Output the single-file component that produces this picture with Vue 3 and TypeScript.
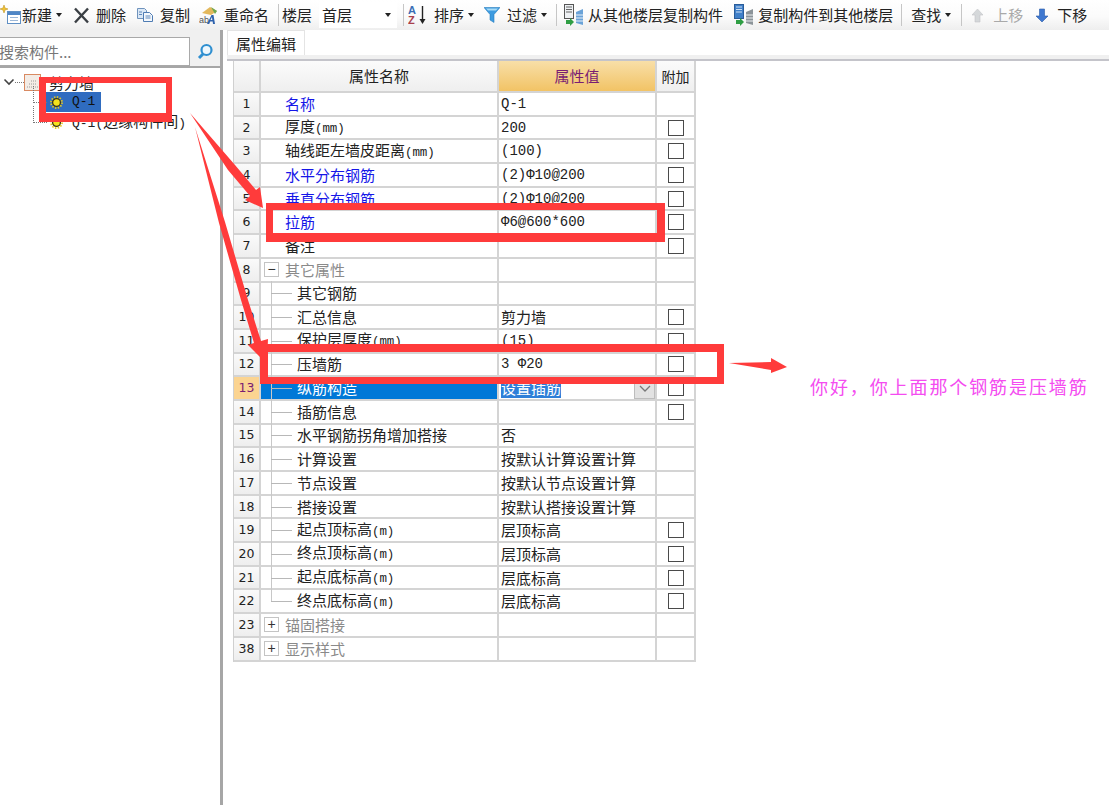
<template>
  <div class="page">
    <div class="toolbar">
      <div class="tool">
        <svg width="22" height="22" viewBox="0 0 22 22"><path d="M4 1l1 3 3 1-3 1-1 3-1-3-3-1 3-1z" fill="#f2c230" stroke="#b98a10" stroke-width=".5"/><rect x="7.500" y="7.500" width="13" height="12" fill="#fff" stroke="#5f8fc4"/><rect x="8" y="8" width="12" height="3" fill="#4f86c6"/><path d="M10 13.500h8M10 16.500h8" stroke="#9db8d8"/></svg>
        <span>新建</span><i class="caret"></i>
      </div>
      <div class="tool m11 g6">
        <svg width="17" height="17" viewBox="0 0 17 17"><path d="M2 1.500l13 14M15 1.500l-13 14" stroke="#3a3f44" stroke-width="2.400"/></svg>
        <span>删除</span>
      </div>
      <div class="tool m10 g6">
        <svg width="18" height="18" viewBox="0 0 18 18"><path d="M1.500 2.500h7l2 2v8h-9z" fill="#dbe8f6" stroke="#6f93bd"/><path d="M7.500 6.500h6l3 3v6h-9z" fill="#f4f8fd" stroke="#4f7cb3"/><path d="M9.500 10h5M9.500 12h5M3 6h3M3 8.500h3" stroke="#5f88ba"/></svg>
        <span>复制</span>
      </div>
      <div class="tool m9 g6">
        <svg width="19" height="20" viewBox="0 0 19 20"><path d="M3 8l8-6 7 4-6 4z" fill="#e3b85c"/><path d="M12 2l6 4-2 3z" fill="#6fa84f"/><text x="0" y="18" class="ab">ab</text><path d="M8 19l4.500-9h2l1.500 9h-2l-.3-2.500h-2.500l-1 2.500zM11.500 15h1.800l-.3-3z" fill="#2e62ad"/></svg>
        <span>重命名</span>
      </div>
      <i class="sep m9"></i>
      <div class="tool m3"><span>楼层</span></div>
      <div class="combo m7"><span>首层</span><i class="caret"></i></div>
      <i class="sep m6"></i>
      <div class="tool m4 g6">
        <svg width="20" height="22" viewBox="0 0 20 22"><text x="0" y="10" class="az blue">A</text><text x="0" y="20" class="az red">Z</text><path d="M14.500 2v16" stroke="#222" stroke-width="1.400"/><path d="M11.500 15l3 5 3-5z" fill="#222"/></svg>
        <span>排序</span><i class="caret"></i>
      </div>
      <div class="tool m10 g7">
        <svg width="16" height="18" viewBox="0 0 16 18"><path d="M0 1.500h16l-6 7v8l-4-2.500v-5.500z" fill="#3d9be0" stroke="#2a7fc0" stroke-width=".6"/><path d="M2 2.500h12l-2 2h-8z" fill="#a9dcf6"/></svg>
        <span>过滤</span><i class="caret"></i>
      </div>
      <i class="sep m9"></i>
      <div class="tool m6 g3">
        <svg width="22" height="24" viewBox="0 0 22 24"><rect x="1.500" y="1.500" width="9" height="14" fill="#eef1f4" stroke="#555"/><path d="M3 4h6M3 6.500h6M3 9h6" stroke="#666"/><path d="M3 17h4v-2l4 4-4 4v-2h-4z" fill="#2f9e44"/><path d="M13 9l7-3v16l-7-2z" fill="#6aa3d8"/><path d="M13 12h7M13 15h7M13 18h7" stroke="#e8f1fa"/></svg>
        <span>从其他楼层复制构件</span>
      </div>
      <div class="tool m10 g3">
        <svg width="22" height="24" viewBox="0 0 22 24"><rect x="1.500" y="1.500" width="9" height="14" fill="#3f7fc8" stroke="#2a5c99"/><path d="M3 4h6M3 6.500h6M3 9h6" stroke="#cfe0f3"/><path d="M3 17h4v-2l4 4-4 4v-2h-4z" fill="#2f9e44"/><path d="M13 9l7-3v16l-7-2z" fill="#8c9499"/><path d="M13 12h7M13 15h7M13 18h7" stroke="#eceff1"/></svg>
        <span>复制构件到其他楼层</span>
      </div>
      <i class="sep m8"></i>
      <div class="tool m9"><span>查找</span><i class="caret"></i></div>
      <i class="sep m10"></i>
      <div class="tool m9 g9 off">
        <svg width="13" height="15" viewBox="0 0 13 15"><path d="M6.500 1l5.500 6h-3v7h-5v-7h-3z" fill="#d5d8da" stroke="#c2c5c8" stroke-width=".6"/></svg>
        <span>上移</span>
      </div>
      <div class="tool m12 g8">
        <svg width="14" height="15" viewBox="0 0 14 15"><path d="M7 14l-6-6h3.500v-7h5v7h3.500z" fill="#3f78d0" stroke="#2c5ca8" stroke-width=".6"/></svg>
        <span>下移</span>
      </div>
    </div>

    <div class="main">
      <aside class="side">
        <div class="search">
          <div class="search-box">搜索构件...</div>
          <div class="search-btn">
            <svg width="20" height="20" viewBox="0 0 20 20"><circle cx="11.500" cy="8" r="5" fill="#eef7fd" stroke="#2f8fd0" stroke-width="2.200"/><path d="M8 12l-4 4" stroke="#2f8fd0" stroke-width="3"/></svg>
          </div>
        </div>
        <div class="tree">
          <div class="node top">
            <svg class="chev" width="12" height="8" viewBox="0 0 12 8"><path d="M1.500 1.500l4.500 4.500 4.500-4.500" fill="none" stroke="#444" stroke-width="1.600"/></svg>
            <i class="dots-h"></i>
            <svg width="17" height="17" viewBox="0 0 17 17"><rect x=".5" y=".5" width="16" height="16" fill="#f3ece6" stroke="#d98a62"/><path d="M3 13h11M5 10h8M7 7h5" stroke="#9a9a9a" stroke-dasharray="1 1"/></svg>
            <span class="node-text">剪力墙</span>
          </div>
          <div class="node child">
            <i class="elbow"></i>
            <div class="picked">
              <svg width="13" height="13" viewBox="0 0 14 14"><circle cx="7" cy="7" r="4.200" fill="#f4e21c" stroke="#3f3610" stroke-width="1.400"/><circle cx="7" cy="7" r="6" fill="none" stroke="#e8c81c" stroke-width="1.800" stroke-dasharray="1.600 1.500"/></svg>
              <span class="asc">Q-1</span>
            </div>
          </div>
          <div class="node child">
            <i class="elbow"></i>
            <div class="plain">
              <svg width="13" height="13" viewBox="0 0 14 14"><circle cx="7" cy="7" r="4.200" fill="#f4e21c" stroke="#3f3610" stroke-width="1.400"/><circle cx="7" cy="7" r="6" fill="none" stroke="#e8c81c" stroke-width="1.800" stroke-dasharray="1.600 1.500"/></svg>
              <span><span class="asc">Q-1(</span>边缘构件间<span class="asc">)</span></span>
            </div>
          </div>
        </div>
      </aside>

      <section class="editor">
        <div class="tabs"><div class="tab">属性编辑</div></div>
        <div class="tab-line"></div>
        <div class="grid">
          <div class="cell head num"></div>
          <div class="cell head">属性名称</div>
          <div class="cell head gold">属性值</div>
          <div class="cell head extra">附加</div>
          <template v-for="row in rows" :key="row.no">
            <div class="cell num" :class="{ current: row.no === 13 }">{{ row.no }}</div>
            <div class="cell name" :class="[row.kind, { link: row.link, sel: row.no === 13, end: row.no === 22 }]">
              <i v-if="row.kind === 'group'" class="fold">{{ row.open ? '−' : '+' }}</i>
              <span>{{ row.name }}<small v-if="row.unit">{{ row.unit }}</small></span>
            </div>
            <div class="cell value" :class="{ mono: row.mono }">
              <span :class="{ mark: row.no === 13 }">{{ row.value }}</span>
              <i v-if="row.no === 13" class="drop">
                <svg width="12" height="7" viewBox="0 0 12 7"><path d="M1 1l5 5 5-5" fill="none" stroke="#777" stroke-width="1.300"/></svg>
              </i>
            </div>
            <div class="cell box-cell"><i v-if="row.check" class="check"></i></div>
          </template>
        </div>
      </section>
    </div>

    <svg class="marks" width="1109" height="805" viewBox="0 0 1109 805">
      <g fill="#ff3b3b" fill-rule="evenodd">
        <path d="M39 77H172V122H39ZM46 83V113H166V83Z"/>
        <path d="M266 203H665V242H266ZM273 210V233H657V210Z"/>
        <path d="M260 344H724V384H260ZM268 352V377H717V352Z"/>
        <path d="M190 113L235 165L256 190L260 187L263 208L245 200L250 196L228 170Z"/>
        <path d="M195 127L225 222L248 300L261 341L268 339L267 364L248 345L254 343L241 300L219 223Z"/>
        <path d="M729 363L771 362L771 358L787 367L771 373L771 370Z"/>
      </g>
      <text x="810" y="394" class="note">你好，你上面那个钢筋是压墙筋</text>
    </svg>
  </div>
</template>

<script setup lang="ts">
interface Row {
  no: number
  name: string
  unit?: string
  value?: string
  mono?: boolean
  kind?: string
  link?: boolean
  open?: boolean
  check?: boolean
}

const rows: Row[] = [
  { no: 1, name: '名称', value: 'Q-1', mono: true, link: true },
  { no: 2, name: '厚度', unit: '(mm)', value: '200', mono: true, check: true },
  { no: 3, name: '轴线距左墙皮距离', unit: '(mm)', value: '(100)', mono: true, check: true },
  { no: 4, name: '水平分布钢筋', value: '(2)Φ10@200', mono: true, link: true, check: true },
  { no: 5, name: '垂直分布钢筋', value: '(2)Φ10@200', mono: true, link: true, check: true },
  { no: 6, name: '拉筋', value: 'Φ6@600*600', mono: true, link: true, check: true },
  { no: 7, name: '备注', check: true },
  { no: 8, name: '其它属性', kind: 'group', open: true },
  { no: 9, name: '其它钢筋', kind: 'sub' },
  { no: 10, name: '汇总信息', kind: 'sub', value: '剪力墙', check: true },
  { no: 11, name: '保护层厚度', unit: '(mm)', kind: 'sub', value: '(15)', mono: true, check: true },
  { no: 12, name: '压墙筋', kind: 'sub', value: '3 Φ20', mono: true, check: true },
  { no: 13, name: '纵筋构造', kind: 'sub', value: '设置插筋', check: true },
  { no: 14, name: '插筋信息', kind: 'sub', check: true },
  { no: 15, name: '水平钢筋拐角增加搭接', kind: 'sub', value: '否' },
  { no: 16, name: '计算设置', kind: 'sub', value: '按默认计算设置计算' },
  { no: 17, name: '节点设置', kind: 'sub', value: '按默认节点设置计算' },
  { no: 18, name: '搭接设置', kind: 'sub', value: '按默认搭接设置计算' },
  { no: 19, name: '起点顶标高', unit: '(m)', kind: 'sub', value: '层顶标高', check: true },
  { no: 20, name: '终点顶标高', unit: '(m)', kind: 'sub', value: '层顶标高', check: true },
  { no: 21, name: '起点底标高', unit: '(m)', kind: 'sub', value: '层底标高', check: true },
  { no: 22, name: '终点底标高', unit: '(m)', kind: 'sub', value: '层底标高', check: true },
  { no: 23, name: '锚固搭接', kind: 'group' },
  { no: 38, name: '显示样式', kind: 'group' },
]
</script>

<style>
html, body { margin: 0; background: #fff; }
</style>

<style scoped>
.page {
  position: relative;
  width: 1109px;
  height: 805px;
  overflow: hidden;
  background: #fff;
  color: #222;
  font: 15px/20px "Noto Sans CJK SC", "Liberation Sans", sans-serif;
}

.toolbar {
  display: flex;
  align-items: center;
  height: 30px;
  background: linear-gradient(#fff, #fbfbfb 55%, #eeeeee);
  white-space: nowrap;
}
.tool { display: flex; align-items: center; flex: none; }
.tool svg { flex: none; }
.off { color: #a9a9a9; }
.caret {
  flex: none;
  width: 0;
  height: 0;
  margin-left: 4px;
  border: 3px solid transparent;
  border-top: 4px solid #222;
  border-bottom: 0;
}
.g6 .caret { margin-left: -2px; }
.g7 .caret { margin-left: -3px; }
.sep { flex: none; width: 1px; height: 22px; background: #c6c6c6; }
.combo {
  display: flex;
  align-items: center;
  justify-content: space-between;
  flex: none;
  width: 78px;
  height: 26px;
  padding: 0 6px 0 3px;
  box-sizing: border-box;
  background: #fff;
}
.m3 { margin-left: 3px; }
.m4 { margin-left: 4px; }
.m6 { margin-left: 6px; }
.m7 { margin-left: 7px; }
.m8 { margin-left: 8px; }
.m9 { margin-left: 9px; }
.m10 { margin-left: 10px; }
.m11 { margin-left: 11px; }
.m12 { margin-left: 12px; }
.g3 { gap: 3px; }
.g6 { gap: 6px; }
.g7 { gap: 7px; }
.g8 { gap: 8px; }
.g9 { gap: 9px; }

.ab { font: 9px "Liberation Sans", sans-serif; fill: #555; }
.az { font: bold 11px "Liberation Sans", sans-serif; }
.blue { fill: #3a6fb5; }
.red { fill: #a8404a; }

.main { display: flex; height: 775px; }

.side {
  flex: none;
  width: 220px;
  height: 100%;
  border-right: 3px solid #a6a6a6;
  box-sizing: content-box;
}
.search {
  display: flex;
  height: 38px;
  padding-top: 7px;
  box-sizing: border-box;
  background: #f0f0f0;
  border-bottom: 2px solid #a6a6a6;
}
.search-box {
  flex: none;
  width: 192px;
  height: 29px;
  margin-left: -2px;
  box-sizing: border-box;
  border: 1px solid #a9a9a9;
  background: #fff;
  color: #777;
  line-height: 27px;
}
.search-btn {
  flex: 1;
  height: 29px;
  display: flex;
  align-items: center;
  justify-content: center;
}
.tree { position: relative; padding-top: 4px; }
.node { display: flex; align-items: center; height: 20px; }
.chev { margin-left: 3px; flex: none; }
.dots-h { width: 9px; border-top: 1px dotted #777; flex: none; }
.node-text { margin-left: 8px; padding-top: 2px; }
.child { position: relative; padding-left: 46px; }
.elbow {
  position: absolute;
  left: 33px;
  top: -6px;
  width: 13px;
  height: 16px;
  border-left: 1px dotted #777;
  border-bottom: 1px dotted #777;
}
.picked, .plain {
  display: flex;
  align-items: center;
  height: 20px;
  gap: 9px;
  padding: 0 6px 0 4px;
}
.asc { font: 13px/20px "Liberation Mono", monospace; }
.picked { background: #2f6cc0; color: #111; }

.editor { flex: 1; min-width: 0; padding-left: 10px; background: #fff; }
.tabs { display: flex; height: 25px; margin-left: -6px; }
.tab {
  width: 78px;
  padding: 3px 0 0 8px;
  box-sizing: border-box;
  background: #fff;
  border: 1px solid #e4e4e4;
  border-bottom: 0;
  white-space: nowrap;
}
.tab-line {
  height: 6px;
  margin-left: -6px;
  background: #f0f0f0;
  border-bottom: 2px solid #c4c4ca;
  box-sizing: border-box;
}

.grid {
  display: grid;
  grid-template-columns: 27px 238px 158px 39px;
  grid-template-rows: 32px repeat(24, 23.700px);
  width: 462px;
  border-left: 1px solid #d0d0d0;
}
.cell {
  position: relative;
  display: flex;
  align-items: center;
  min-width: 0;
  border-right: 2px solid #d4d4d4;
  border-bottom: 2px solid #d4d4d4;
  box-sizing: border-box;
  white-space: nowrap;
}
.head {
  justify-content: center;
  background: linear-gradient(#fbfbfb, #efefef);
}
.gold {
  background: linear-gradient(#f8dfa8, #f2c365);
  color: #7a1d73;
}
.extra { font-size: 14px; }
.num {
  justify-content: center;
  background: linear-gradient(#fafafa, #eeeeee);
  font: 12.500px/20px "DejaVu Sans", sans-serif;
}
.num.current { background: #fbd491; color: #7a1d73; }

.name { padding-left: 24px; }
.name small { font: 12.500px/20px "Liberation Mono", monospace; letter-spacing: -.1px; }
.link { color: #1515e8; }
.sub { padding-left: 36px; }
.sub::before {
  content: "";
  position: absolute;
  left: 10px;
  top: -2px;
  bottom: -2px;
  width: 1px;
  background: #c8c8c8;
}
.sub::after {
  content: "";
  position: absolute;
  left: 10px;
  top: 50%;
  width: 21px;
  height: 1px;
  background: #b8b8b8;
}
.end::before { bottom: 50%; }
.group { padding-left: 3px; color: #8a8a8a; }
.fold {
  display: flex;
  align-items: center;
  justify-content: center;
  flex: none;
  width: 15px;
  height: 15px;
  margin-right: 6px;
  border: 1px solid #c4c4c4;
  box-sizing: border-box;
  background: #fff;
  color: #333;
  font: normal 14px/13px "Liberation Sans", sans-serif;
}
.sel { background: #0078d7; color: #fff; }

.value { padding-left: 2px; }
.value.mono { font: 14px/20px "Liberation Mono", monospace; }
.mark { background: #2f7fd8; color: #fff; }
.drop {
  position: absolute;
  right: 0;
  top: 0;
  bottom: 0;
  width: 21px;
  display: flex;
  align-items: center;
  justify-content: center;
  background: #e2e2e2;
  border: 1px solid #bdbdbd;
  box-sizing: border-box;
}

.box-cell { justify-content: center; }
.check {
  width: 16px;
  height: 16px;
  border: 1px solid #4a4a4a;
  box-sizing: border-box;
  background: #fff;
}

.marks { position: absolute; left: 0; top: 0; pointer-events: none; }
.note {
  font: 18px "Noto Sans CJK SC", sans-serif;
  letter-spacing: 1.900px;
  fill: #f44cf0;
}
</style>
